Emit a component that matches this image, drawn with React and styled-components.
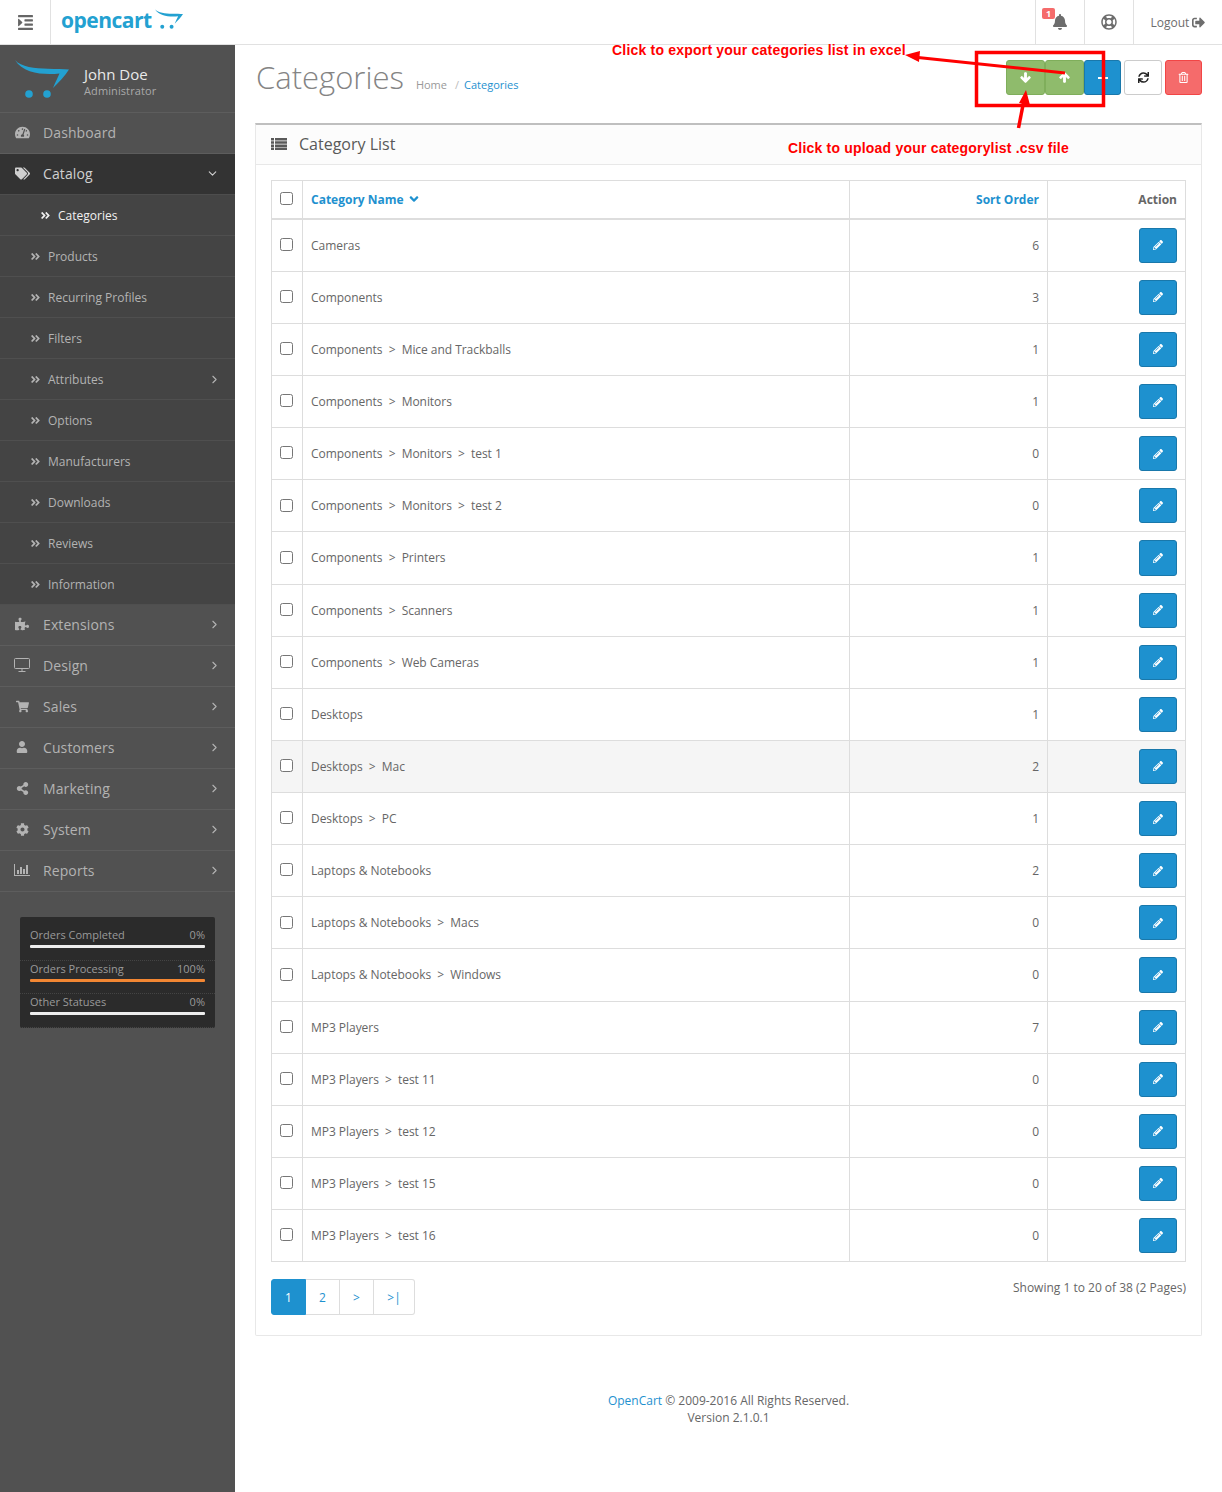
import styled, { createGlobalStyle } from "styled-components";
import { ChevronRight, ChevronDown } from "lucide-react";
import {
  FaTachometerAlt,
  FaTags,
  FaPuzzlePiece,
  FaShoppingCart,
  FaUser,
  FaShareAlt,
  FaCog,
  FaAngleDoubleRight,
  FaAngleDown,
  FaBell,
  FaRegLifeRing,
  FaSignOutAlt,
  FaPencilAlt,
  FaArrowDown,
  FaArrowUp,
  FaSync,
  FaRegTrashAlt,
  FaIndent,
} from "react-icons/fa";

const GlobalStyle = createGlobalStyle`
  * { box-sizing: border-box; }
  body {
    margin: 0;
    background: #fff;
    font-family: "Open Sans", sans-serif;
    font-size: 12px;
    color: #666;
  }
`;

const categories = [
  ["Cameras", 6],
  ["Components", 3],
  ["Components  >  Mice and Trackballs", 1],
  ["Components  >  Monitors", 1],
  ["Components  >  Monitors  >  test 1", 0],
  ["Components  >  Monitors  >  test 2", 0],
  ["Components  >  Printers", 1],
  ["Components  >  Scanners", 1],
  ["Components  >  Web Cameras", 1],
  ["Desktops", 1],
  ["Desktops  >  Mac", 2],
  ["Desktops  >  PC", 1],
  ["Laptops & Notebooks", 2],
  ["Laptops & Notebooks  >  Macs", 0],
  ["Laptops & Notebooks  >  Windows", 0],
  ["MP3 Players", 7],
  ["MP3 Players  >  test 11", 0],
  ["MP3 Players  >  test 12", 0],
  ["MP3 Players  >  test 15", 0],
  ["MP3 Players  >  test 16", 0],
];

const subItems = [
  "Categories",
  "Products",
  "Recurring Profiles",
  "Filters",
  "Attributes",
  "Options",
  "Manufacturers",
  "Downloads",
  "Reviews",
  "Information",
];

function DesktopIcon() {
  return (
    <svg width="16" height="14" viewBox="0 0 16 14" fill="none" stroke="currentColor">
      <rect x="0.5" y="0.5" width="15" height="10" rx="1" />
      <path d="M8 11v2M4.5 13.5h7" />
    </svg>
  );
}

function ReportsIcon() {
  return (
    <svg width="16" height="12" viewBox="0 0 16 12" fill="currentColor">
      <path d="M0 0h1v11h15v1H0z" />
      <path d="M3 6h2v4H3zM6 3h2v7H6zM9 5h2v5H9zM12 1h2v9h-2z" />
    </svg>
  );
}

function ListIcon() {
  return (
    <svg width="16" height="12" viewBox="0 0 16 12" fill="currentColor">
      <path d="M0 0h3v2.500H0zM4 0h12v2.500H4zM0 3.200h3v2.500H0zM4 3.200h12v2.500H4zM0 6.400h3v2.500H0zM4 6.400h12v2.500H4zM0 9.600h3V12H0zM4 9.600h12V12H4z" />
    </svg>
  );
}

function CartLogo({ width, height, color }) {
  return (
    <svg width={width} height={height} viewBox="0 0 54 38" fill={color}>
      <path d="M0 0C6 7 20 8.500 33 8.800C41 9 48 9 54 9.500C50 16 44 22 38 28C41 21 43 17 44.500 13.500C30 15 8 14 0 0Z" />
      <circle cx="14" cy="34" r="3.800" />
      <circle cx="32" cy="34" r="3.800" />
    </svg>
  );
}

function NavArrow() {
  return (
    <Caret>
      <ChevronRight size={13} strokeWidth={2} />
    </Caret>
  );
}

export default function App() {
  return (
    <Page>
      <GlobalStyle />
      <Header>
        <MenuToggle>
          <FaIndent size={17} />
        </MenuToggle>
        <Logo>
          <LogoText>opencart</LogoText>
          <CartLogo width={28} height={20} color="#23a1d1" />
        </Logo>
        <HeaderNav>
          <HeaderItem $w={49}>
            <Badge>1</Badge>
            <FaBell size={16} />
          </HeaderItem>
          <HeaderItem $w={49}>
            <FaRegLifeRing size={16} />
          </HeaderItem>
          <HeaderItem $w={89}>
            Logout&nbsp;
            <FaSignOutAlt size={13} />
          </HeaderItem>
        </HeaderNav>
      </Header>
      <Body>
        <Sidebar>
          <Profile>
            <CartLogo width={54} height={38} color="#23a1d1" />
            <ProfileText>
              <ProfileName>John Doe</ProfileName>
              <ProfileRole>Administrator</ProfileRole>
            </ProfileText>
          </Profile>
          <NavItem>
            <NavIcon><FaTachometerAlt size={15} /></NavIcon>
            Dashboard
          </NavItem>
          <NavItem $active>
            <NavIcon><FaTags size={15} /></NavIcon>
            Catalog
            <Caret $down><ChevronDown size={13} strokeWidth={2} /></Caret>
          </NavItem>
          {subItems.map((name, i) => (
            <SubItem key={name} $active={i === 0}>
              <FaAngleDoubleRight size={11} />
              {name}
              {name === "Attributes" && <NavArrow />}
            </SubItem>
          ))}
          <NavItem>
            <NavIcon><FaPuzzlePiece size={14} /></NavIcon>
            Extensions
            <NavArrow />
          </NavItem>
          <NavItem>
            <NavIcon><DesktopIcon /></NavIcon>
            Design
            <NavArrow />
          </NavItem>
          <NavItem>
            <NavIcon><FaShoppingCart size={13} /></NavIcon>
            Sales
            <NavArrow />
          </NavItem>
          <NavItem>
            <NavIcon><FaUser size={12} /></NavIcon>
            Customers
            <NavArrow />
          </NavItem>
          <NavItem>
            <NavIcon><FaShareAlt size={13} /></NavIcon>
            Marketing
            <NavArrow />
          </NavItem>
          <NavItem>
            <NavIcon><FaCog size={13} /></NavIcon>
            System
            <NavArrow />
          </NavItem>
          <NavItem>
            <NavIcon><ReportsIcon /></NavIcon>
            Reports
            <NavArrow />
          </NavItem>
          <Stats>
            <StatRow>
              <StatLabel><span>Orders Completed</span><span>0%</span></StatLabel>
              <StatBar />
            </StatRow>
            <StatRow>
              <StatLabel><span>Orders Processing</span><span>100%</span></StatLabel>
              <StatBar $fill />
            </StatRow>
            <StatRow>
              <StatLabel><span>Other Statuses</span><span>0%</span></StatLabel>
              <StatBar />
            </StatRow>
          </Stats>
        </Sidebar>
        <Content>
          <PageHeader>
            <TitleGroup>
              <Title>Categories</Title>
              <Crumbs>
                <CrumbHome>Home</CrumbHome>
                <CrumbSep>/</CrumbSep>
                <CrumbLink>Categories</CrumbLink>
              </Crumbs>
            </TitleGroup>
            <Actions>
              <Joined>
                <ActionButton $kind="green" $w={39}>
                  <FaArrowDown size={11} stroke="currentColor" strokeWidth={50} />
                </ActionButton>
                <ActionButton $kind="green" $w={39}>
                  <FaArrowUp size={11} stroke="currentColor" strokeWidth={50} />
                </ActionButton>
                <ActionButton $kind="blue" $w={37}><CopyMark /></ActionButton>
              </Joined>
              <ActionButton $kind="white" $w={38}><FaSync size={11} /></ActionButton>
              <ActionButton $kind="red" $w={37}><FaRegTrashAlt size={11} /></ActionButton>
            </Actions>
          </PageHeader>
          <Panel>
            <PanelHeading>
              <ListIcon />
              <PanelTitle>Category List</PanelTitle>
            </PanelHeading>
            <PanelBody>
              <Table>
                <colgroup>
                  <col width="31" />
                  <col width="547" />
                  <col width="198" />
                  <col width="138" />
                </colgroup>
                <thead>
                  <tr>
                    <HeadCell $center><input type="checkbox" /></HeadCell>
                    <HeadCell>
                      <SortLink>Category Name <FaAngleDown size={14} /></SortLink>
                    </HeadCell>
                    <HeadCell $right><SortLink>Sort Order</SortLink></HeadCell>
                    <HeadCell $right>Action</HeadCell>
                  </tr>
                </thead>
                <tbody>
                  {categories.map(([name, order]) => (
                    <Row key={name} $hover={name === "Desktops  >  Mac"}>
                      <Cell $center><input type="checkbox" /></Cell>
                      <Cell $pre>{name}</Cell>
                      <Cell $right>{order}</Cell>
                      <Cell $right>
                        <EditButton><FaPencilAlt size={10} /></EditButton>
                      </Cell>
                    </Row>
                  ))}
                </tbody>
              </Table>
              <PagerRow>
                <Pager>
                  <PageLink $active $w={35}>1</PageLink>
                  <PageLink $w={34}>2</PageLink>
                  <PageLink $w={34}>&gt;</PageLink>
                  <PageLink $w={41}>&gt;|</PageLink>
                </Pager>
                <Showing>Showing 1 to 20 of 38 (2 Pages)</Showing>
              </PagerRow>
            </PanelBody>
          </Panel>
          <Footer>
            <FooterLink>OpenCart</FooterLink> © 2009-2016 All Rights Reserved.
            <br />
            Version 2.1.0.1
          </Footer>
        </Content>
      </Body>

      <Note $x={612} $y={41}>Click to export your categories list in excel</Note>
      <Note $x={788} $y={139}>Click to upload your categorylist .csv file</Note>
      <Markup width="1222" height="140" viewBox="0 0 1222 140">
        <rect x="976.500" y="52.500" width="127" height="53" fill="none" stroke="#f00" strokeWidth="3.500" />
        <path d="M1065 73L918 57.500" stroke="#f00" strokeWidth="3" />
        <path d="M905 55L920 51L919 62Z" fill="#f00" />
        <path d="M1018.500 128L1024 100" stroke="#f00" strokeWidth="3.500" />
        <path d="M1026 90L1030 105L1019 103Z" fill="#f00" />
      </Markup>
    </Page>
  );
}

const Page = styled.div`
  position: relative;
  min-height: 1492px;
  display: flex;
  flex-direction: column;
`;

const Header = styled.header`
  height: 45px;
  display: flex;
  align-items: stretch;
  border-bottom: 1px solid #e1e1e1;
  background: #fff;
`;

const MenuToggle = styled.div`
  width: 51px;
  display: flex;
  align-items: center;
  justify-content: center;
  color: #666;
  border-right: 1px solid #e1e1e1;
`;

const Logo = styled.div`
  display: flex;
  align-items: flex-start;
  gap: 3px;
  padding: 9px 0 0 10px;
`;

const LogoText = styled.span`
  font-family: "Open Sans", sans-serif;
  font-weight: 700;
  font-size: 21px;
  line-height: 22px;
  letter-spacing: -0.5px;
  color: #23a1d1;
`;

const HeaderNav = styled.nav`
  margin-left: auto;
  display: flex;
`;

const HeaderItem = styled.div`
  position: relative;
  width: ${(p) => p.$w}px;
  display: flex;
  align-items: center;
  justify-content: center;
  border-left: 1px solid #e1e1e1;
  color: #6d6d6d;
  font-size: 12px;
`;

const Badge = styled.span`
  position: absolute;
  left: 6px;
  top: 8px;
  width: 13px;
  height: 11px;
  border-radius: 2px;
  background: #f56b6b;
  color: #fff;
  font-size: 9px;
  font-weight: 700;
  line-height: 11px;
  text-align: center;
`;

const Body = styled.div`
  flex: 1;
  display: flex;
`;

const Sidebar = styled.aside`
  width: 235px;
  flex-shrink: 0;
  background: #515151;
`;

const Profile = styled.div`
  height: 68px;
  display: flex;
  align-items: center;
  gap: 15px;
  padding: 1px 0 0 15px;
  border-bottom: 1px solid #5d5d5d;
`;

const ProfileText = styled.div`
  display: flex;
  flex-direction: column;
  margin-top: 6px;
`;

const ProfileName = styled.div`
  color: #e9e9e9;
  font-size: 15px;
  line-height: 18px;
`;

const ProfileRole = styled.div`
  color: #a9a9a9;
  font-size: 11px;
  line-height: 16px;
  letter-spacing: 0.100px;
`;

const NavItem = styled.div`
  height: 41px;
  display: flex;
  align-items: center;
  padding: 0 0 2px 14px;
  font-size: 14px;
  letter-spacing: 0.100px;
  color: ${(p) => (p.$active ? "#d0d0d0" : "#b3b3b3")};
  background: ${(p) => (p.$active ? "#333" : "transparent")};
  border-bottom: 1px solid ${(p) => (p.$active ? "#4d4d4d" : "#5d5d5d")};
`;

const NavIcon = styled.span`
  width: 16px;
  margin-right: 13px;
  display: flex;
  align-items: center;
  justify-content: center;
`;

const Caret = styled.span`
  margin-left: auto;
  margin-right: ${(p) => (p.$down ? 16 : 14)}px;
  display: flex;
`;

const SubItem = styled.div`
  height: 41px;
  display: flex;
  align-items: center;
  gap: 7px;
  padding-left: ${(p) => (p.$active ? 40 : 30)}px;
  font-size: 12px;
  color: ${(p) => (p.$active ? "#f1f1f1" : "#b3b3b3")};
  background: #444;
  border-bottom: 1px solid #4f4f4f;
`;

const Stats = styled.div`
  margin: 25px 20px 0;
  padding: 10px 10px 0;
  height: 111px;
  background: #2b2b2b;
  border-radius: 2px;
`;

const StatRow = styled.div`
  height: 33.500px;
  margin: 0 -10px;
  padding: 0 10px;
  border-bottom: 1px dotted #444;
`;

const StatLabel = styled.div`
  display: flex;
  justify-content: space-between;
  font-size: 11px;
  line-height: 15px;
  color: #9a9a9a;
`;

const StatBar = styled.div`
  height: 3px;
  margin-top: 3px;
  border-radius: 1px;
  background: ${(p) => (p.$fill ? "#f38733" : "#eee")};
`;

const Content = styled.main`
  flex: 1;
  min-width: 0;
  padding: 0 20px;
`;

const PageHeader = styled.div`
  height: 78px;
  display: flex;
  justify-content: space-between;
  align-items: flex-start;
`;

const TitleGroup = styled.div`
  display: flex;
  align-items: flex-start;
  padding-top: 11px;
`;

const Title = styled.h1`
  margin: 0 12px 0 1px;
  font-size: 31px;
  font-weight: 300;
  line-height: 42px;
  color: #848484;
`;

const Crumbs = styled.div`
  display: flex;
  margin-top: 21px;
  font-size: 11px;
  line-height: 16px;
`;

const CrumbHome = styled.span`
  color: #999;
`;

const CrumbSep = styled.span`
  margin: 0 5px 0 8px;
  color: #bbb;
`;

const CrumbLink = styled.span`
  color: #1e91cf;
`;

const Actions = styled.div`
  display: flex;
  gap: 3px;
  padding-top: 15px;
`;

const Joined = styled.div`
  display: flex;
`;

const kinds = {
  green: "background:#8fbb6c;border-color:#7fae5b;color:#fff;",
  blue: "background:#1e91cf;border-color:#1978ab;color:#fff;",
  white: "background:#fff;border-color:#ccc;color:#222;",
  red: "background:#f56b6b;border-color:#f24545;color:#fff;",
};

const ActionButton = styled.div`
  width: ${(p) => p.$w}px;
  height: 35px;
  display: flex;
  align-items: center;
  justify-content: center;
  border: 1px solid;
  border-radius: 3px;
  ${(p) => kinds[p.$kind]}
`;

const CopyMark = styled.span`
  width: 10px;
  height: 2px;
  margin-top: 1px;
  background: #fff;
`;

const Panel = styled.section`
  border: 1px solid #e8e8e8;
  border-top: 2px solid #bfbfbf;
  border-radius: 0 0 2px 2px;
`;

const PanelHeading = styled.div`
  height: 40px;
  display: flex;
  align-items: center;
  gap: 12px;
  padding: 0 0 2px 15px;
  background: #fcfcfc;
  border-bottom: 1px solid #e8e8e8;
  color: #595959;
`;

const PanelTitle = styled.h3`
  margin: 0;
  font-size: 16px;
  font-weight: 400;
  color: #595959;
`;

const PanelBody = styled.div`
  padding: 15px;
`;

const Table = styled.table`
  width: 914px;
  table-layout: fixed;
  border-collapse: collapse;
  border: 1px solid #ddd;
`;

const HeadCell = styled.td`
  height: 38.150px;
  padding: 0 8px;
  border: 1px solid #ddd;
  border-bottom-width: 2px;
  font-weight: 700;
  text-align: ${(p) => (p.$right ? "right" : p.$center ? "center" : "left")};

  input {
    margin: 0 1px 0 0;
    vertical-align: middle;
    position: relative;
    top: -2px;
  }
`;

const SortLink = styled.span`
  display: inline-flex;
  align-items: center;
  gap: 3px;
  color: #1e91cf;
`;

const Row = styled.tr`
  background: ${(p) => (p.$hover ? "#f5f5f5" : "transparent")};
`;

const Cell = styled.td`
  padding: 8px;
  border: 1px solid #ddd;
  line-height: 17.140px;
  white-space: ${(p) => (p.$pre ? "pre" : "normal")};
  letter-spacing: ${(p) => (p.$pre ? "-0.040px" : "0")};
  text-align: ${(p) => (p.$right ? "right" : p.$center ? "center" : "left")};

  input {
    margin: 0 1px 0 0;
    vertical-align: middle;
    position: relative;
    top: -2px;
  }
`;

const EditButton = styled.div`
  display: inline-flex;
  align-items: center;
  justify-content: center;
  vertical-align: middle;
  width: 38px;
  height: 35.140px;
  background: #1e91cf;
  border: 1px solid #1978ab;
  border-radius: 3px;
  color: #fff;
`;

const PagerRow = styled.div`
  display: flex;
  justify-content: space-between;
  align-items: flex-start;
  margin-top: 17px;
  height: 41px;
`;

const Pager = styled.div`
  display: flex;
  height: 36px;
`;

const PageLink = styled.span`
  width: ${(p) => p.$w}px;
  display: flex;
  align-items: center;
  justify-content: center;
  color: ${(p) => (p.$active ? "#fff" : "#1e91cf")};
  background: ${(p) => (p.$active ? "#1e91cf" : "#fff")};
  border: 1px solid ${(p) => (p.$active ? "#1e91cf" : "#ddd")};
  border-left-width: ${(p) => (p.$active ? 1 : 0)}px;

  &:first-child {
    border-radius: 3px 0 0 3px;
  }
  &:last-child {
    border-radius: 0 3px 3px 0;
  }
`;

const Showing = styled.div`
  line-height: 17px;
`;

const Footer = styled.footer`
  margin-top: 56px;
  text-align: center;
  line-height: 17px;
  color: #666;
`;

const FooterLink = styled.span`
  color: #1e91cf;
`;

const Note = styled.div`
  position: absolute;
  left: ${(p) => p.$x}px;
  top: ${(p) => p.$y}px;
  font-family: "Liberation Sans", Arial, sans-serif;
  font-size: 14px;
  line-height: 18px;
  font-weight: 700;
  letter-spacing: 0.200px;
  color: #f00;
  white-space: nowrap;
`;

const Markup = styled.svg`
  position: absolute;
  left: 0;
  top: 0;
  pointer-events: none;
`;
